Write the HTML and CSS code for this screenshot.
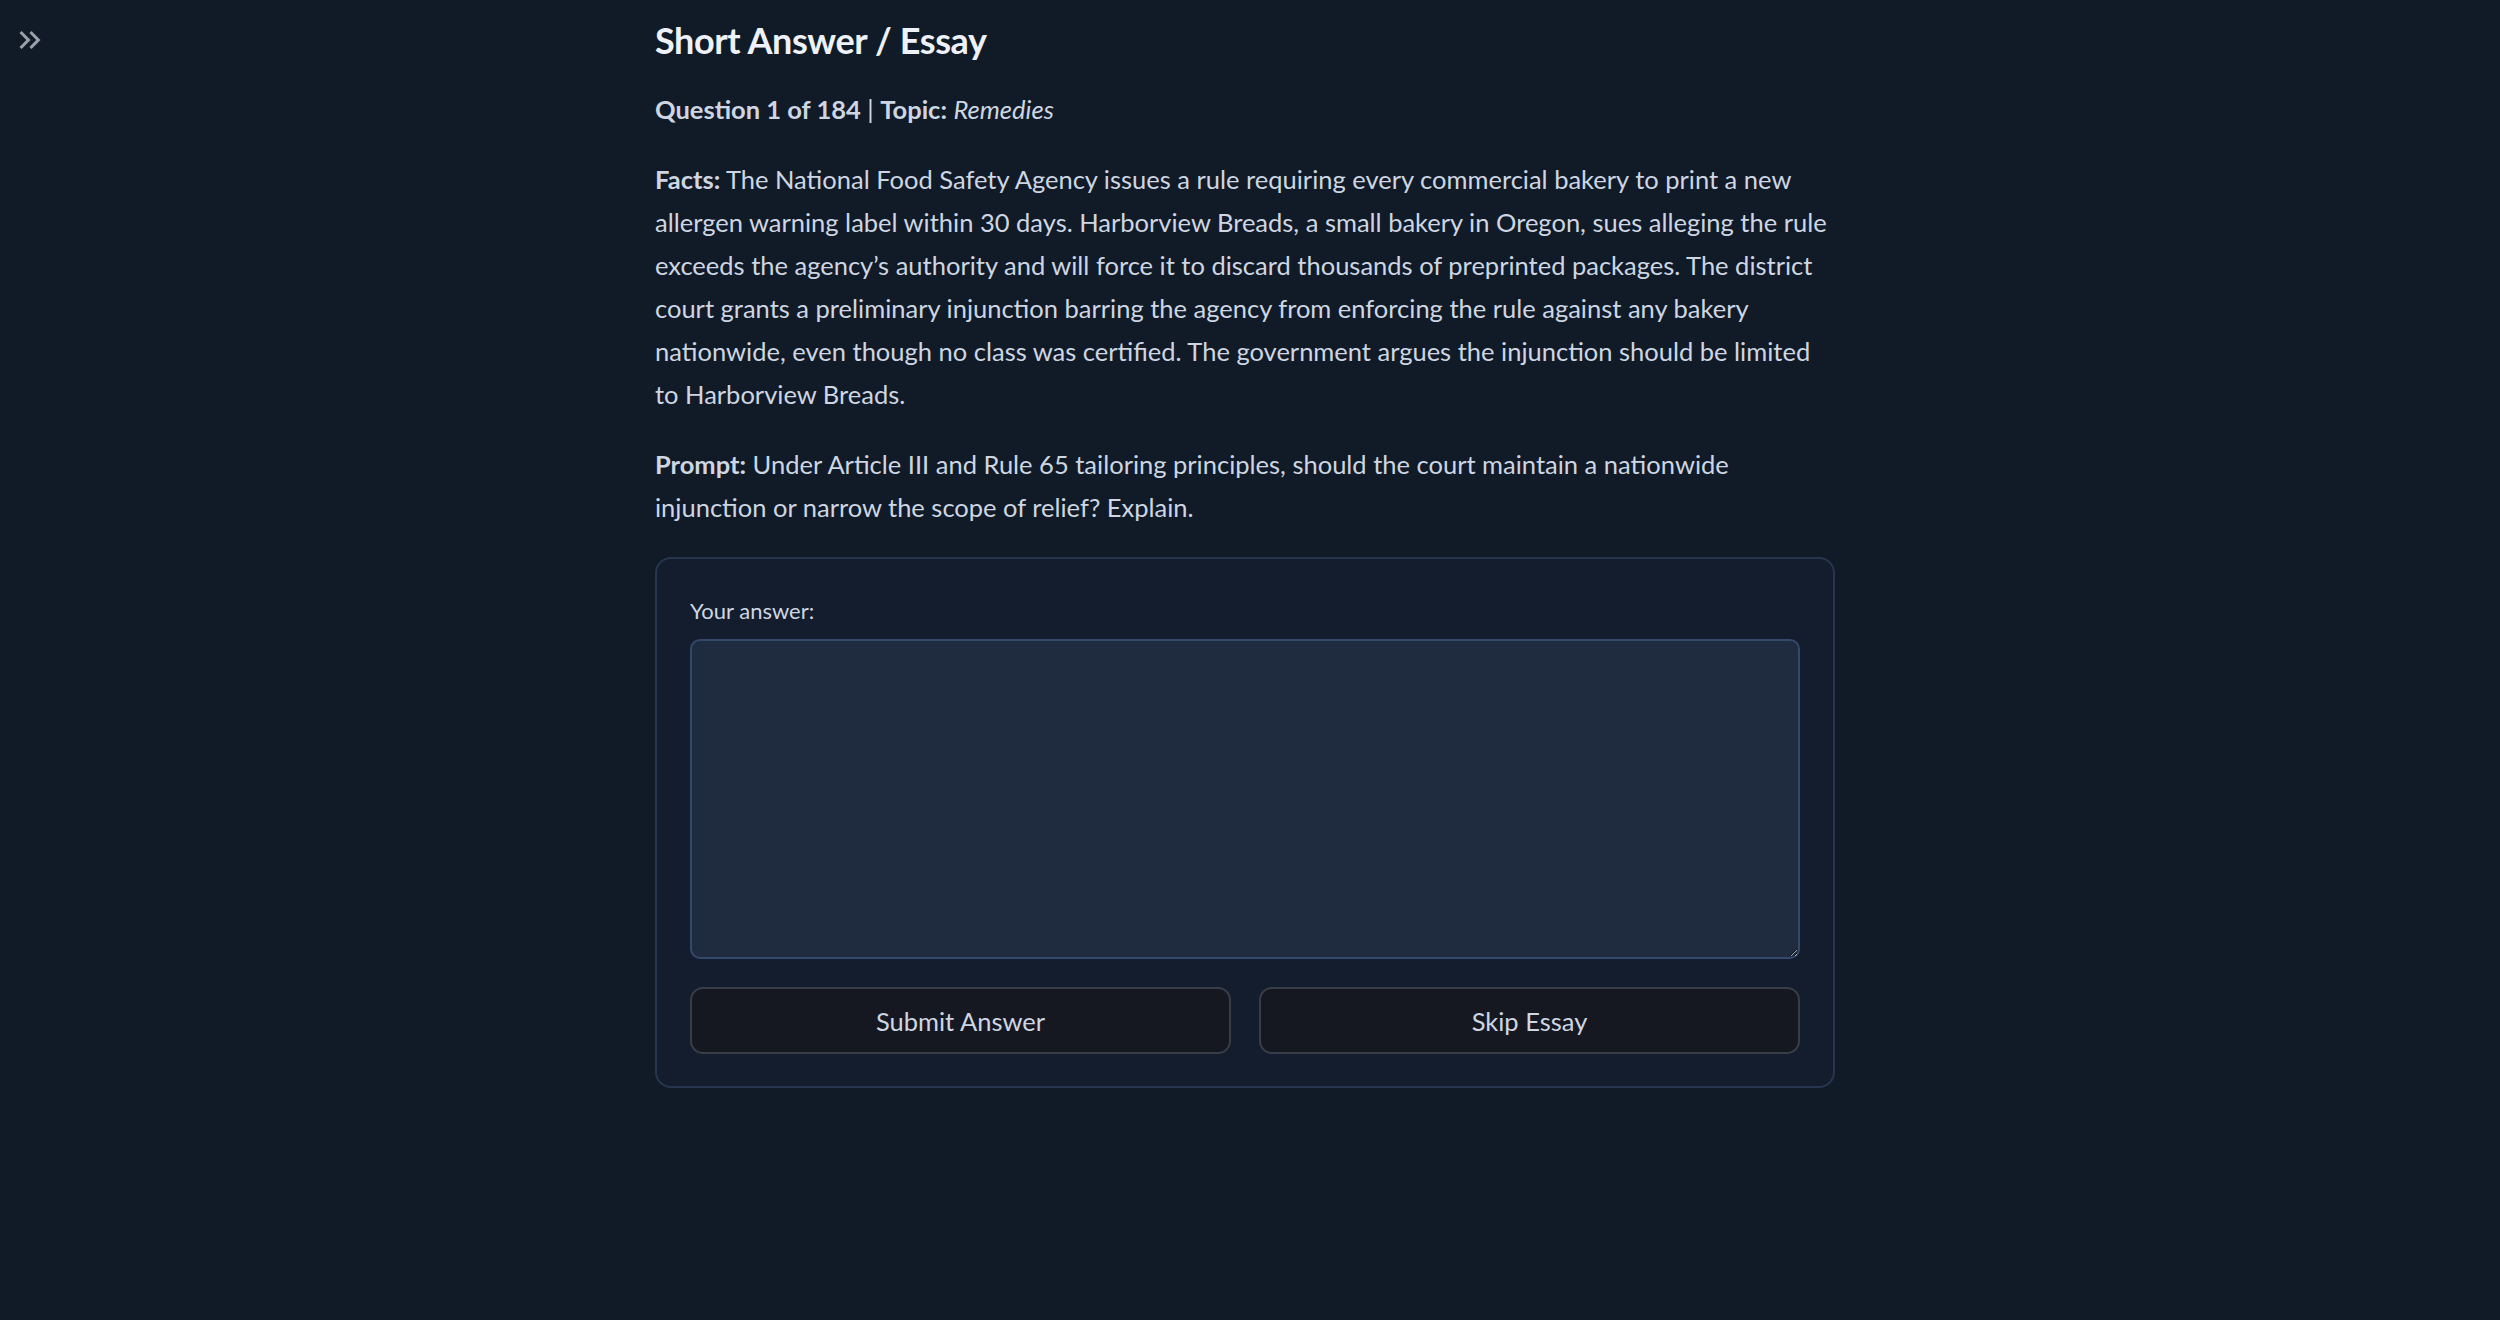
FILE: index.html
```html
<!DOCTYPE html>
<html>

<head>
	<meta charset="utf-8" />
	<title>Short Answer / Essay</title>
	<link rel="stylesheet" href="styles.css">
</head>

<body>
	<a class="sidebar-toggle" href="#">
		<svg viewBox="0 0 24 24" width="36" height="36">
			<path d="M6.41 6L5 7.41 9.58 12 5 16.59 6.41 18l6-6z M13 6l-1.41 1.41L16.17 12l-4.58 4.59L13 18l6-6z" />
		</svg>
	</a>
	<div class="page">
		<div class="main">
			<h3 class="title">Short Answer / Essay</h3>
			<p><strong>Question 1 of 184</strong> | <strong>Topic:</strong> <em>Remedies</em></p>
			<p><strong>Facts:</strong> The National Food Safety Agency issues a rule requiring every commercial bakery to print a new allergen warning label within 30 days. Harborview Breads, a small bakery in Oregon, sues alleging the rule exceeds the agency&rsquo;s authority and will force it to discard thousands of preprinted packages. The district court grants a preliminary injunction barring the agency from enforcing the rule against any bakery nationwide, even though no class was certified. The government argues the injunction should be limited to Harborview Breads.</p>
			<p><strong>Prompt:</strong> Under Article III and Rule 65 tailoring principles, should the court maintain a nationwide injunction or narrow the scope of relief? Explain.</p>
			<form class="answer-card">
				<label class="field-label" for="answer">Your answer:</label>
				<textarea id="answer" class="answer-box"></textarea>
				<div class="button-row">
					<button type="button" class="btn">Submit Answer</button>
					<button type="button" class="btn">Skip Essay</button>
				</div>
			</form>
		</div>
	</div>
</body>

</html>
```

FILE: styles.css
```css
body {
	margin: 0;
	background: #111b27;
	color: #cdd6e2;
	font-family: Lato, "Liberation Sans", sans-serif;
	font-size: 25.5px;
	line-height: 43px;
}

.sidebar-toggle {
	position: fixed;
	top: 22px;
	left: 12px;
	width: 36px;
	height: 36px;
	fill: #9aa1ab;
}

.page {
	display: flex;
	justify-content: center;
	padding-right: 10px;
}

.main {
	width: 1180px;
	padding-top: 12px;
}

.title {
	margin: 0 0 20px 0;
	font-size: 36px;
	line-height: 56px;
	font-weight: 700;
	letter-spacing: -0.4px;
	color: #eef2f8;
}

p {
	margin: 0 0 27px 0;
}

strong {
	font-weight: 700;
}

.answer-card {
	display: flex;
	flex-direction: column;
	box-sizing: border-box;
	margin-top: 28px;
	padding: 37px 33px 32px 33px;
	background: #141d2d;
	border: 2px solid #26364f;
	border-radius: 16px;
}

.field-label {
	font-size: 22px;
	line-height: 30px;
	margin-bottom: 13px;
}

.answer-box {
	box-sizing: border-box;
	height: 320px;
	background: #1f2c3f;
	border: 2px solid #34496a;
	border-radius: 10px;
	color: #cdd6e2;
	font-family: inherit;
	font-size: 25px;
	resize: vertical;
	outline: none;
}

.button-row {
	display: grid;
	grid-template-columns: 1fr 1fr;
	gap: 28px;
	margin-top: 28px;
}

.btn {
	height: 67px;
	background: #151821;
	border: 2px solid #393d46;
	border-radius: 13px;
	color: #cdd6e2;
	font-family: inherit;
	font-size: 25.5px;
	cursor: pointer;
}
```
